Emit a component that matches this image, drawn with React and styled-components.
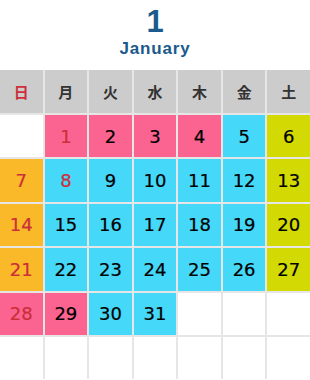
import React from 'react'
import styled, { createGlobalStyle } from 'styled-components'

const Global = createGlobalStyle`
  body {
    margin: 0;
    background: #ffffff;
    font-family: "Liberation Sans", Arial, sans-serif;
  }
`

const Page = styled.div`
  width: 310px;
  height: 380px;
  overflow: hidden;
`

const Title = styled.header`
  display: flex;
  flex-direction: column;
  align-items: center;
  padding-top: 6px;
  height: 70px;
  box-sizing: border-box;
  color: #1b5a8b;
`

const Day = styled.div`
  font-size: 31px;
  line-height: 31px;
  font-weight: bold;
`

const Month = styled.div`
  margin-top: 3px;
  font-size: 17px;
  line-height: 17px;
  font-weight: bold;
  letter-spacing: 0.8px;
`

const Grid = styled.div`
  display: grid;
  grid-template-columns: repeat(7, 1fr);
  grid-template-rows: 43px;
  grid-auto-rows: 42.4px;
  gap: 2px;
  background: #e6e6e6;
`

const Head = styled.div`
  background: #cccccc;
  display: flex;
  align-items: center;
  justify-content: center;
  font-family: "Noto Sans CJK JP", sans-serif;
  font-size: 15px;
  font-weight: bold;
  color: ${p => (p.$sun ? '#cc2e3a' : '#333333')};
`

const colors = {
  pink: '#fb6490',
  cyan: '#45d8f9',
  lime: '#d3d902',
  orange: '#fab928',
  none: '#ffffff',
}

const Cell = styled.div`
  background: ${p => colors[p.$tone]};
  display: flex;
  align-items: center;
  justify-content: center;
  font-family: "DejaVu Sans", sans-serif;
  font-size: 18px;
  -webkit-text-stroke: 0.2px currentColor;
  color: ${p => (p.$red ? '#cc2e3a' : '#000000')};
`

const weekdays = ['日', '月', '火', '水', '木', '金', '土']

const days = [
  [null, 'none'], [1, 'pink', true], [2, 'pink'], [3, 'pink'], [4, 'pink'], [5, 'cyan'], [6, 'lime'],
  [7, 'orange', true], [8, 'cyan', true], [9, 'cyan'], [10, 'cyan'], [11, 'cyan'], [12, 'cyan'], [13, 'lime'],
  [14, 'orange', true], [15, 'cyan'], [16, 'cyan'], [17, 'cyan'], [18, 'cyan'], [19, 'cyan'], [20, 'lime'],
  [21, 'orange', true], [22, 'cyan'], [23, 'cyan'], [24, 'cyan'], [25, 'cyan'], [26, 'cyan'], [27, 'lime'],
  [28, 'pink', true], [29, 'pink'], [30, 'cyan'], [31, 'cyan'], [null, 'none'], [null, 'none'], [null, 'none'],
  [null, 'none'], [null, 'none'], [null, 'none'], [null, 'none'], [null, 'none'], [null, 'none'], [null, 'none'],
]

export default function App() {
  return (
    <Page>
      <Global />
      <Title>
        <Day>1</Day>
        <Month>January</Month>
      </Title>
      <Grid>
        {weekdays.map((w, i) => (
          <Head key={w} $sun={i === 0}>{w}</Head>
        ))}
        {days.map(([n, tone, red], i) => (
          <Cell key={i} $tone={tone} $red={red}>{n}</Cell>
        ))}
      </Grid>
    </Page>
  )
}
